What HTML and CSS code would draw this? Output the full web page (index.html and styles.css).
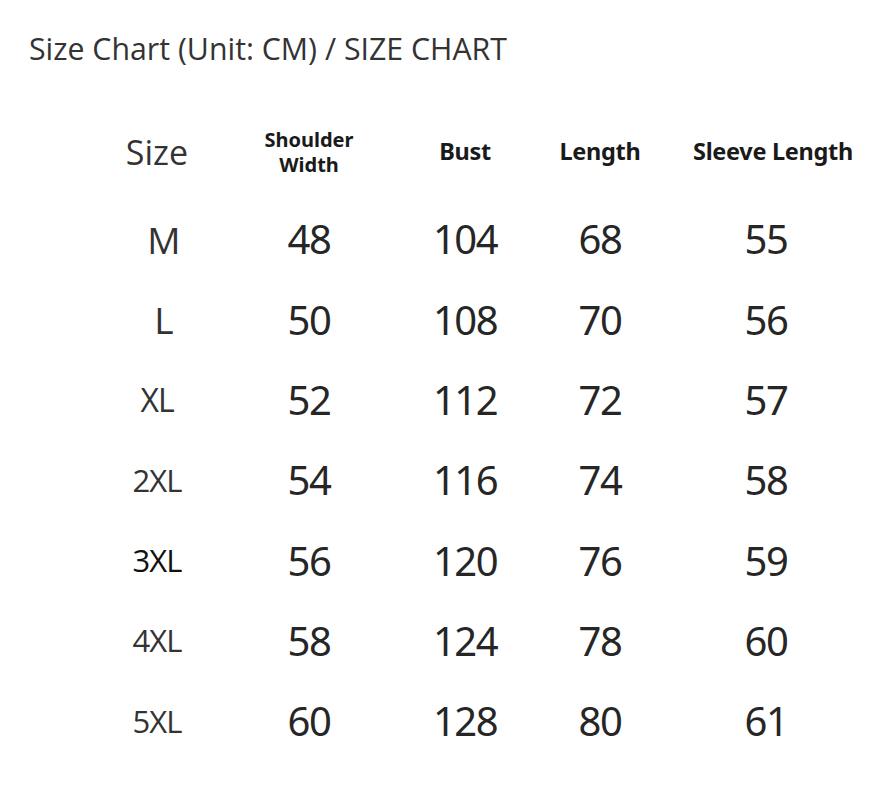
FILE: index.html
```html
<!DOCTYPE html>
<html>
<head>
<meta charset="utf-8">
<link rel="stylesheet" href="styles.css">
</head>
<body>
<div class="page">
  <h1 class="title">Size Chart (Unit: CM) / SIZE CHART</h1>
  <div class="chart">
    <div class="row head">
      <div class="cell c1 size-head">Size</div>
      <div class="cell c2 small-head">Shoulder<br>Width</div>
      <div class="cell c3">Bust</div>
      <div class="cell c4">Length</div>
      <div class="cell c5">Sleeve Length</div>
    </div>
    <div class="row"><div class="cell c1 lab big">M</div><div class="cell c2">48</div><div class="cell c3">104</div><div class="cell c4">68</div><div class="cell c5">55</div></div>
    <div class="row"><div class="cell c1 lab big">L</div><div class="cell c2">50</div><div class="cell c3">108</div><div class="cell c4">70</div><div class="cell c5">56</div></div>
    <div class="row"><div class="cell c1 lab mid">XL</div><div class="cell c2">52</div><div class="cell c3">112</div><div class="cell c4">72</div><div class="cell c5">57</div></div>
    <div class="row"><div class="cell c1 lab">2XL</div><div class="cell c2">54</div><div class="cell c3">116</div><div class="cell c4">74</div><div class="cell c5">58</div></div>
    <div class="row"><div class="cell c1 lab dark">3XL</div><div class="cell c2">56</div><div class="cell c3">120</div><div class="cell c4">76</div><div class="cell c5">59</div></div>
    <div class="row"><div class="cell c1 lab">4XL</div><div class="cell c2">58</div><div class="cell c3">124</div><div class="cell c4">78</div><div class="cell c5">60</div></div>
    <div class="row"><div class="cell c1 lab">5XL</div><div class="cell c2">60</div><div class="cell c3">128</div><div class="cell c4">80</div><div class="cell c5">61</div></div>
  </div>
</div>
</body>
</html>
```
FILE: styles.css
```css
html, body {
  margin: 0;
  padding: 0;
  background: #ffffff;
}
.page {
  width: 877px;
  height: 803px;
  overflow: hidden;
  font-family: "Open Sans", "Noto Sans", sans-serif;
  color: #2b2b2b;
}
.title {
  margin: 0;
  padding: 29px 0 0 29px;
  font-size: 30.3px;
  line-height: 40px;
  font-weight: 400;
  color: #333333;
}
.chart {
  margin-top: 43px;
  padding-left: 97px;
}
.row {
  display: grid;
  grid-template-columns: 120px 184px 128px 142px 204px;
  height: 80.3px;
  align-items: center;
}
.row.head {
  margin-bottom: 7px;
}
.cell {
  text-align: center;
  font-family: "Noto Sans", "Open Sans", sans-serif;
  font-size: 40px;
  letter-spacing: -1.5px;
  line-height: 1;
  color: #262626;
}
.cell.c5 {
  padding-right: 14px;
}
.head .cell {
  font-family: "Noto Sans", "Open Sans", sans-serif;
  font-weight: 700;
  font-size: 23.5px;
  letter-spacing: -0.3px;
  color: #1a1a1a;
}
.head .cell.c5 {
  padding-right: 0;
}
.head .size-head {
  font-family: "Open Sans", sans-serif;
  font-weight: 400;
  font-size: 34px;
  letter-spacing: 0;
  color: #333333;
}
.head .small-head {
  font-size: 20px;
  line-height: 25px;
  letter-spacing: 0;
}
.lab {
  font-family: "Open Sans", sans-serif;
  font-size: 31px;
  letter-spacing: -1px;
  color: #333333;
}
.lab.big {
  font-size: 37px;
  letter-spacing: 0;
  padding-left: 14px;
}
.lab.mid {
  font-size: 32px;
}
.lab.dark {
  color: #111111;
}
```
